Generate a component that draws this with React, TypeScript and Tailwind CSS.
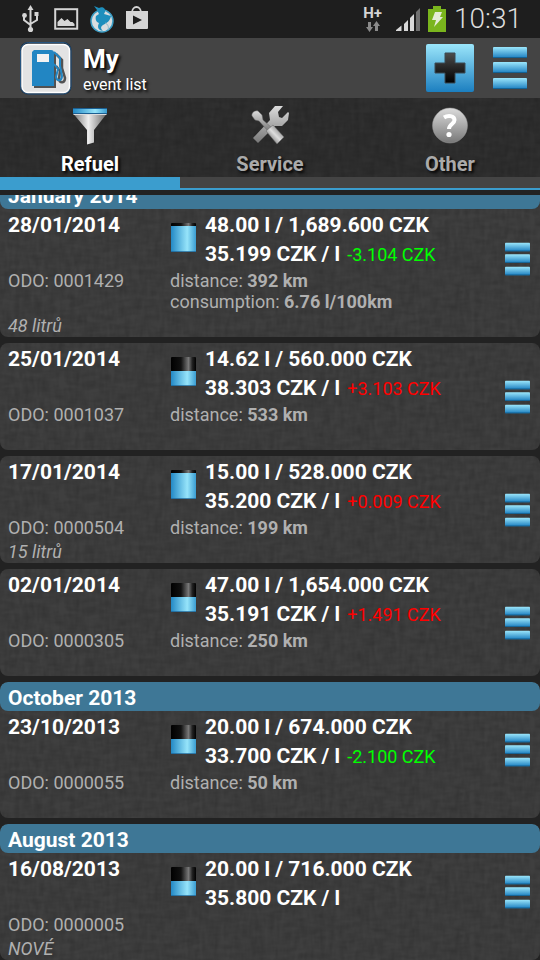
import { useState } from "react";
import clsx from "clsx";

type Entry = {
  date: string;
  odo: string;
  full: boolean;
  total: string;
  price: string;
  diff?: string;
  distance?: string;
  consumption?: string;
  note?: string;
  month?: string;
};

const entries: Entry[] = [
  {
    month: "January 2014",
    date: "28/01/2014",
    odo: "0001429",
    full: true,
    total: "48.00 l / 1,689.600 CZK",
    price: "35.199 CZK / l",
    diff: "-3.104 CZK",
    distance: "392 km",
    consumption: "6.76 l/100km",
    note: "48 litrů",
  },
  {
    date: "25/01/2014",
    odo: "0001037",
    full: false,
    total: "14.62 l / 560.000 CZK",
    price: "38.303 CZK / l",
    diff: "+3.103 CZK",
    distance: "533 km",
  },
  {
    date: "17/01/2014",
    odo: "0000504",
    full: true,
    total: "15.00 l / 528.000 CZK",
    price: "35.200 CZK / l",
    diff: "+0.009 CZK",
    distance: "199 km",
    note: "15 litrů",
  },
  {
    date: "02/01/2014",
    odo: "0000305",
    full: false,
    total: "47.00 l / 1,654.000 CZK",
    price: "35.191 CZK / l",
    diff: "+1.491 CZK",
    distance: "250 km",
  },
  {
    month: "October 2013",
    date: "23/10/2013",
    odo: "0000055",
    full: false,
    total: "20.00 l / 674.000 CZK",
    price: "33.700 CZK / l",
    diff: "-2.100 CZK",
    distance: "50 km",
  },
  {
    month: "August 2013",
    date: "16/08/2013",
    odo: "0000005",
    full: false,
    total: "20.00 l / 716.000 CZK",
    price: "35.800 CZK / l",
    note: "NOVÉ",
  },
];

const tabs = [
  { key: "refuel", label: "Refuel", Icon: FunnelIcon },
  { key: "service", label: "Service", Icon: ToolsIcon },
  { key: "other", label: "Other", Icon: QuestionIcon },
];

// Shared gradients and the cloth filter, referenced by id from the icons
function Defs() {
  return (
    <svg className="absolute size-0" aria-hidden="true">
      <defs>
        <filter id="cloth" x="0" y="0" width="100%" height="100%">
          <feTurbulence type="fractalNoise" baseFrequency="0.06 0.2" numOctaves="2" seed="4" result="a" />
          <feTurbulence type="fractalNoise" baseFrequency="0.2 0.06" numOctaves="2" seed="9" result="b" />
          <feComposite in="a" in2="b" operator="arithmetic" k2="0.5" k3="0.5" />
          <feColorMatrix values="0 0 0 0 0  0 0 0 0 0  0 0 0 0 0  2.4 0 0 0 -0.8" />
        </filter>
        <linearGradient id="sky" x1="0" y1="0" x2="0" y2="1">
          <stop offset="0" stopColor="#9be6fb" />
          <stop offset="1" stopColor="#1c7fc0" />
        </linearGradient>
        <linearGradient id="skyAcross">
          <stop offset="0" stopColor="#2389c6" />
          <stop offset="0.65" stopColor="#96e4fa" />
          <stop offset="1" stopColor="#3a9dd2" />
        </linearGradient>
        <linearGradient id="blackAcross">
          <stop offset="0" stopColor="#000" />
          <stop offset="0.4" stopColor="#111" />
          <stop offset="0.7" stopColor="#777" />
          <stop offset="0.85" stopColor="#222" />
          <stop offset="1" stopColor="#000" />
        </linearGradient>
        <linearGradient id="black" x1="0" y1="0" x2="0" y2="1">
          <stop offset="0" stopColor="#4c4c4c" />
          <stop offset="1" stopColor="#000" />
        </linearGradient>
        <linearGradient id="steel" x1="0" y1="0" x2="0" y2="1">
          <stop offset="0" stopColor="#dcdcdc" />
          <stop offset="1" stopColor="#777" />
        </linearGradient>
        <linearGradient id="steelAcross">
          <stop offset="0" stopColor="#777" />
          <stop offset="0.45" stopColor="#eee" />
          <stop offset="1" stopColor="#666" />
        </linearGradient>
        <linearGradient id="handle" x1="0" y1="1" x2="1" y2="0">
          <stop offset="0.2" stopColor="#777" />
          <stop offset="0.5" stopColor="#ddd" />
          <stop offset="0.8" stopColor="#888" />
        </linearGradient>
      </defs>
    </svg>
  );
}

function Cloth() {
  return (
    <svg className="pointer-events-none absolute inset-0 size-full opacity-15" aria-hidden="true">
      <rect width="100%" height="100%" filter="url(#cloth)" />
    </svg>
  );
}

function FunnelIcon() {
  return (
    <svg className="h-10 w-9 shrink-0" viewBox="0 0 36 40" aria-hidden="true">
      <path d="M1.500 9h33L22 25v12.500l-7 2V25z" fill="url(#steelAcross)" />
      <rect x="1" y="3" width="34" height="6" fill="url(#skyAcross)" />
      <path d="M1 3.500h34M1 8.500h34" stroke="#1b5f92" />
      <path d="M1.500 9.500h33" stroke="#ddd" />
    </svg>
  );
}

function ToolsIcon() {
  return (
    <svg className="size-10 shrink-0" viewBox="0 0 40 40" aria-hidden="true">
      <path
        d="M3 33 20 15l-1-7 6-7 8 0-5 6 1 5 3 1 6-6 1 1-1 7-6 6-7 0L8 38z"
        fill="url(#steel)"
      />
      <path
        d="M2 11c-1-3 3-6 6-5l4 4 1 5 9 8-4 3-9-10-4-1z"
        fill="url(#steel)"
        stroke="#666"
        strokeWidth="0.500"
      />
      <path d="M16 26l7-6 11 12-7 7z" fill="url(#handle)" stroke="#666" strokeWidth="0.500" />
    </svg>
  );
}

function QuestionIcon() {
  return (
    <svg className="size-10 shrink-0" viewBox="0 0 40 40" aria-hidden="true">
      <circle cx="20" cy="20.500" r="17.500" fill="url(#steel)" stroke="#999" strokeWidth="0.500" />
      <path
        d="M14 12.500c4-2.500 10.500-2 10.500 2.500 0 4-5.500 4-5.500 9"
        fill="none"
        stroke="#fff"
        strokeWidth="4"
      />
      <circle cx="19" cy="29.500" r="2.600" fill="#fff" />
    </svg>
  );
}

function PumpIcon() {
  return (
    <svg className="size-14" viewBox="0 0 56 56" aria-hidden="true">
      <rect x="2" y="2" width="51.500" height="52.500" rx="8" fill="#1d2b3a" />
      <rect x="2.500" y="2.500" width="50.500" height="51.500" rx="8" fill="none" stroke="#28557f" />
      <rect x="4" y="4.500" width="47.500" height="48" rx="6" fill="#e3e3e3" stroke="#fff" strokeWidth="1.500" />
      <g opacity="0.750" transform="translate(2 2)">
        <path d="M16 10h17c2 0 3 1 3 3v33H14V12z" fill="#222" />
        <path
          d="M36 12l6 6v8l3 10c0 5-5 6-6 1l1-8-4-5"
          fill="none"
          stroke="#222"
          strokeWidth="2.500"
        />
      </g>
      <path d="M16 10h17c2 0 3 1 3 3v33H14V12z" fill="#2286c3" />
      <path d="M19 14h12v8H19z" fill="#f2f2f2" />
      <path
        d="M36 12l6 6v8l2 10c0 5-5 6-6 1l2-8-4-5"
        fill="none"
        stroke="#2286c3"
        strokeWidth="2"
      />
    </svg>
  );
}

function BarsIcon({ className }: { className: string }) {
  return (
    <svg className={className} viewBox="0 0 34 44" preserveAspectRatio="none" aria-hidden="true">
      {[1, 16, 32].map((y) => (
        <g key={y}>
          <rect y={y} width="34" height="11" rx="1" fill="url(#sky)" />
          <path d={`M0 ${y + 10.5}h34`} stroke="#136294" />
        </g>
      ))}
    </svg>
  );
}

function TankIcon({ full }: { full: boolean }) {
  return (
    <svg className="mt-[11px] h-8 w-7 shrink-0" viewBox="0 0 28 32" aria-hidden="true">
      <rect x="1" y="1" width="25" height="16" rx="1" fill="url(#blackAcross)" />
      <rect x="1" y={full ? 4 : 15} width="25" height={full ? 26 : 15} fill="url(#skyAcross)" />
      <path d="M1 29.500h25" stroke="#1b5f92" strokeOpacity="0.700" />
    </svg>
  );
}

function StatusBar() {
  return (
    <div className="flex h-[38px] items-center justify-between bg-[#1e1e1e] pr-[18px] pl-5">
      <div className="flex items-center gap-[11px]">
        <svg className="h-7 w-5" viewBox="0 0 20 28" fill="none" stroke="#d5d5d5" strokeWidth="2" aria-hidden="true">
          <path d="M10.500 4v20M4 11v4l6.500 5M17 10v5l-6.500 4" />
          <path d="M10.500 0l3 5h-6z" fill="#d5d5d5" stroke="none" />
          <circle cx="10.500" cy="24.500" r="2.600" fill="#d5d5d5" stroke="none" />
          <circle cx="4.500" cy="10.500" r="2.400" fill="#d5d5d5" stroke="none" />
          <path d="M14.500 7h4v4h-4z" fill="#d5d5d5" stroke="none" />
        </svg>
        <svg className="h-7 w-7" viewBox="0 0 28 28" aria-hidden="true">
          <rect x="4.200" y="4.200" width="22" height="19.500" fill="none" stroke="#d5d5d5" strokeWidth="2" />
          <path d="M6.500 21v-4l4-4 3 3 3-2 3 3h2l2 2v2z" fill="#d5d5d5" />
        </svg>
        <svg className="h-7 w-6" viewBox="0 0 24 28" aria-hidden="true">
          <circle cx="12" cy="16" r="11" fill="#d9dddf" stroke="#3a9cc4" strokeWidth="1.500" />
          <path d="M4 1l5 2c3-2 7 0 6 4l-1 2 7 2c-1 5-4 7-8 9-3 2-2 4 0 6-5-1-6-4-4-8-3-1-4-4-3-7l3-2-2-4z" fill="#1e8fbd" />
          <path d="M15 18c3 1 4 4 3 7" fill="none" stroke="#8db9ca" />
        </svg>
        <svg className="h-7 w-6" viewBox="0 0 24 28" aria-hidden="true">
          <path d="M7 8c0-8 9-8 9 0" fill="none" stroke="#d5d5d5" strokeWidth="1.800" />
          <path d="M1 6h22v17a1 1 0 0 1-1 1H2a1 1 0 0 1-1-1z" fill="#d5d5d5" />
          <path d="M8 10.500l9 4.500-9 4.500z" fill="#1e1e1e" />
        </svg>
      </div>

      <div className="flex items-center gap-2">
        <div className="mr-[6px] flex flex-col items-center">
          <span className="text-[15px] leading-4 font-bold text-[#d5d5d5]">H+</span>
          <svg className="h-3 w-4" viewBox="0 0 16 12" fill="#8a8a8a" aria-hidden="true">
            <path d="M3 1h3v5h2L4.500 11 1 6h2zM10 10h3V5h2l-3.500-5L8 5h2z" />
          </svg>
        </div>
        <svg className="h-7 w-6" viewBox="0 0 24 28" fill="#d8d8d8" aria-hidden="true">
          <path d="M0 26v-1l5.500-4.500V26zM8 26v-7l4-4v11zM14 26V13l4-4v17z" />
          <path d="M20 26V7l4-4v23z" fill="#707070" />
        </svg>
        <svg className="h-7 w-[18px]" viewBox="0 0 18 28" aria-hidden="true">
          <path d="M5 1h8v3h5v23H0V4h5z" fill="#7ab51d" />
          <path d="M7 7h7l-2 5h3L6 22l2-7H4z" fill="#e4ecd6" />
        </svg>
        <span className="text-[28px] leading-8 font-light text-[#dcdcdc]">10:31</span>
      </div>
    </div>
  );
}

function EntryCard({ entry }: { entry: Entry }) {
  return (
    <article className="relative overflow-hidden rounded-lg bg-[#3f3f3f]">
      <Cloth />
      {entry.month && (
        <h2 className="relative h-[29px] rounded-lg bg-[#3e7796] px-2 text-[21px] leading-8 font-bold">
          {entry.month}
        </h2>
      )}
      <div className="relative grid grid-cols-[162px_1fr] px-2 pt-[2px] text-lg leading-[21px] text-[#b0b0b0]">
        <div className="text-[21px] leading-[29px] font-bold text-white">{entry.date}</div>
        <div className="flex h-[59px] gap-[7px]">
          <TankIcon full={entry.full} />
          <div className="text-[21px] leading-[29px] font-bold text-white">
            <div>{entry.total}</div>
            <div>
              {entry.price}
              {entry.diff && (
                <span
                  className={clsx(
                    "ml-[7px] text-lg leading-[21px] font-normal",
                    entry.diff.startsWith("-") ? "text-[#00ff00]" : "text-[#ff0000]"
                  )}
                >
                  {entry.diff}
                </span>
              )}
            </div>
          </div>
        </div>
        <div>ODO: {entry.odo}</div>
        <div>
          {entry.distance && (
            <div>
              distance: <b>{entry.distance}</b>
            </div>
          )}
          {entry.consumption && (
            <div>
              consumption: <b>{entry.consumption}</b>
            </div>
          )}
        </div>
        <div className="col-span-2 h-[25px] leading-7 italic">{entry.note}</div>
      </div>
      <button className="absolute inset-y-0 right-0 px-[10px]" aria-label="Event menu">
        <BarsIcon className="h-[34px] w-[25px]" />
      </button>
    </article>
  );
}

export default function App() {
  const [active, setActive] = useState("refuel");

  return (
    <div className="min-h-screen bg-[#222] font-['Roboto',sans-serif] text-white">
      <Defs />
      <StatusBar />
      <header className="flex h-[60px] items-center bg-[#444] pr-[13px] pl-[18px]">
        <PumpIcon />
        <div className="ml-[9px] flex-1 pt-[6px] text-shadow-[2px_2px_3px_#000]">
          <h1 className="text-[26px] leading-7 font-bold">My</h1>
          <p className="text-base leading-6">event list</p>
        </div>
        <button aria-label="Add event">
          <svg className="size-12" viewBox="0 0 48 48" aria-hidden="true">
            <rect width="48" height="48" rx="2" fill="url(#sky)" />
            <path d="M19 9h10v10h10v10H29v10H19V29H9V19h10z" fill="url(#black)" stroke="#3a4a55" />
          </svg>
        </button>
        <button className="ml-[19px]" aria-label="Menu">
          <BarsIcon className="h-11 w-[34px]" />
        </button>
      </header>

      <nav className="relative border-b-2 border-[#3b9dce] bg-[#2f2f2f]">
        <Cloth />
        <div className="relative grid grid-cols-3">
          {tabs.map(({ key, label, Icon }) => (
            <button
              key={key}
              onClick={() => setActive(key)}
              className={clsx(
                "flex h-[90px] flex-col items-center border-b-11 pt-[7px] text-xl leading-[38px] font-bold text-shadow-[2px_2px_3px_#000]",
                active === key ? "border-[#3b9dce] text-white" : "border-[#444] text-[#aaa]"
              )}
            >
              <Icon />
              {label}
            </button>
          ))}
        </div>
      </nav>

      {/* the list is scrolled a little, so its first heading is cut off */}
      <main className="mt-[5px] overflow-hidden">
        <div className="-mt-[15px] flex flex-col gap-[6px]">
          {entries.map((entry) => (
            <EntryCard key={entry.date} entry={entry} />
          ))}
        </div>
      </main>
    </div>
  );
}
